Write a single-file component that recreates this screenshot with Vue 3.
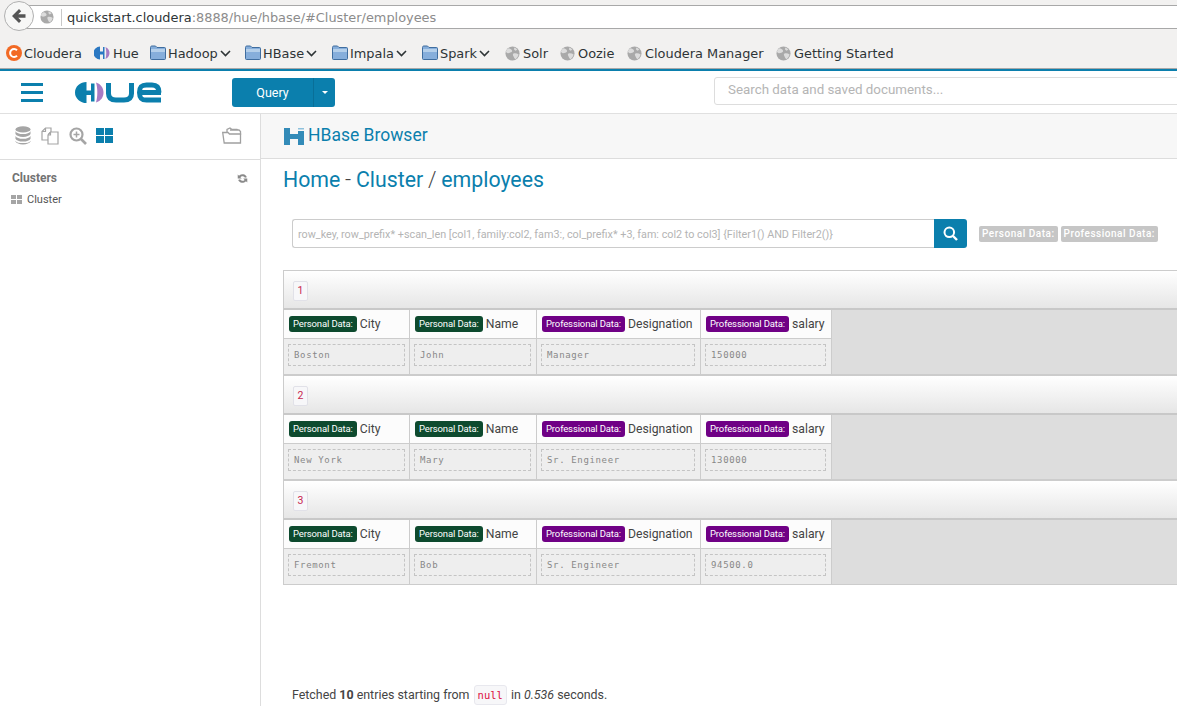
<script setup>
const bookmarks = [
  { icon: 'cloudera', text: 'Cloudera', w: 88 },
  { icon: 'hue', text: 'Hue', w: 56 },
  { icon: 'folder', text: 'Hadoop', chev: true, w: 95 },
  { icon: 'folder', text: 'HBase', chev: true, w: 87 },
  { icon: 'folder', text: 'Impala', chev: true, w: 90 },
  { icon: 'folder', text: 'Spark', chev: true, w: 83 },
  { icon: 'globe', text: 'Solr', w: 55 },
  { icon: 'globe', text: 'Oozie', w: 67 },
  { icon: 'globe', text: 'Cloudera Manager', w: 149 },
  { icon: 'globe', text: 'Getting Started', w: 120 },
]
const columns = [
  { fam: 'Personal Data:', kind: 'personal', name: 'City' },
  { fam: 'Personal Data:', kind: 'personal', name: 'Name' },
  { fam: 'Professional Data:', kind: 'professional', name: 'Designation' },
  { fam: 'Professional Data:', kind: 'professional', name: 'salary' },
]
const rows = [
  { key: '1', values: ['Boston', 'John', 'Manager', '150000'] },
  { key: '2', values: ['New York', 'Mary', 'Sr. Engineer', '130000'] },
  { key: '3', values: ['Fremont', 'Bob', 'Sr. Engineer', '94500.0'] },
]
</script>

<template>
  <div class="page">
    <header class="browser">
      <div class="urlrow">
        <div class="back">
          <svg width="18" height="18" viewBox="0 0 18 18"><path d="M15.5 7.2H8.2l3-3L9 2 2 9l7 7 2.2-2.2-3-3h7.3z" fill="#555"/></svg>
        </div>
        <div class="urlbar">
          <svg class="urlglobe" width="14" height="14" viewBox="0 0 16 16"><circle cx="8" cy="8" r="7.5" fill="#a9a9a9"/><path d="M4 2.5c2 .5 3 1.2 3.5 2.5S6 7 4.500 7.500 1.500 7 1 6c.5-1.500 1.500-2.800 3-3.500zM9 8c2-.5 4 0 5.500 1-.5 2.500-2 4-3.500 5-1-.5-1.500-2-2-3s-1-2.500 0-3zM10 1.500c1.500.5 2.500 1.500 3.200 2.500L11 5 9.500 3.500z" fill="#dcdcdc"/></svg>
          <span class="urlsep"></span>
          <span class="urltext">quickstart.cloudera<span class="urlrest">:8888/hue/hbase/#Cluster/employees</span></span>
        </div>
      </div>
      <nav class="bookmarks">
        <div v-for="b in bookmarks" :key="b.text" class="bm" :style="{ width: b.w + 'px' }">
          <svg v-if="b.icon === 'cloudera'" class="bmicon" width="16" height="16" viewBox="0 0 16 16"><circle cx="8" cy="8" r="8" fill="#f26a25"/><path d="M11 5.200A4 4 0 1 0 11 10.800" fill="none" stroke="#fff" stroke-width="2"/></svg>
          <svg v-else-if="b.icon === 'hue'" class="bmicon hueicon" width="16" height="16" viewBox="0 0 16 16"><path d="M6 1.500A6.500 6.500 0 0 0 6 14.500V9.500H9V14H10.500V2H9V6.500H6z" fill="#2b78c2"/><path d="M11.500 2C14.500 3.500 15.500 6 15.500 8S14.500 12.500 11.500 14C12.500 10.500 12.500 5.500 11.500 2z" fill="#a77bc4"/></svg>
          <svg v-else-if="b.icon === 'folder'" class="bmicon" width="16" height="16" viewBox="0 0 16 16"><path d="M.5 2.500c0-1 .5-1.500 1.500-1.500h3.500l1.500 1.500h7.500c.7 0 1 .4 1 1v10c0 .7-.4 1-1 1H1.500c-.7 0-1-.4-1-1z" fill="#86aedb" stroke="#3f6d9f"/><path d="M1 4h14v3H1z" fill="#b4cfea"/></svg>
          <svg v-else class="bmicon globe" width="15" height="15" viewBox="0 0 16 16"><circle cx="8" cy="8" r="7.500" fill="#a9a9a9"/><path d="M4 2.500c2 .5 3 1.200 3.500 2.500S6 7 4.500 7.500 1.500 7 1 6c.5-1.500 1.500-2.800 3-3.500zM9 8c2-.5 4 0 5.500 1-.5 2.500-2 4-3.500 5-1-.5-1.500-2-2-3s-1-2.500 0-3zM10 1.500c1.500.5 2.500 1.500 3.200 2.500L11 5 9.500 3.500z" fill="#dcdcdc"/></svg>
          <span class="bmtext">{{ b.text }}</span>
          <svg v-if="b.chev" class="chev" width="11" height="7" viewBox="0 0 11 7"><path d="M1 1l4.500 4.500L10 1" fill="none" stroke="#2e3436" stroke-width="1.600"/></svg>
        </div>
      </nav>
    </header>

    <div class="hue-nav">
      <button class="burger" aria-label="menu"><i></i><i></i><i></i></button>
      <svg class="logo" width="87" height="21" viewBox="0 0 87 21">
        <path d="M11.500 0A11.500 10.500 0 0 0 11.500 21V13H16V19.500H19.500V1.500H16V8.500H11.500z" fill="#0b7fad"/>
        <path d="M21 .5C26 2 28.500 6 28.500 10.500S26 19 21 20.500C22.800 15 22.800 6 21 .5z" fill="#a77bc4"/>
        <path d="M33.500 1V11.500C33.500 16 36 18 41 18H49C54 18 56.500 16 56.500 11.500V1" fill="none" stroke="#0b7fad" stroke-width="5"/>
        <path d="M84 10.500C84 5 81.500 3 77 3H71.500C66 3 64.500 5 64.500 10.500S66 18 71.500 18H86M64 10.500H86" fill="none" stroke="#0b7fad" stroke-width="5"/>
      </svg>
      <div class="query">
        <span class="q-main">Query</span>
        <span class="q-caret"><i></i></span>
      </div>
      <div class="nav-search">Search data and saved documents...</div>
    </div>

    <div class="body">
      <aside class="sidebar">
        <div class="side-tabs">
          <svg width="16" height="19" viewBox="0 0 17 20"><g fill="#a5a5a5"><ellipse cx="8.500" cy="3.500" rx="8" ry="3.200"/><path d="M.5 5.500c1 2 4 3 8 3s7-1 8-3v3c-1 2-4 3-8 3s-7-1-8-3zM.5 10.500c1 2 4 3 8 3s7-1 8-3v3c-1 2-4 3-8 3s-7-1-8-3z"/><path d="M.5 15.500c1 2 4 2.500 8 2.500s7-.5 8-2.500v1c-1 2-4 3-8 3s-7-1-8-3z"/></g></svg>
          <svg class="t2" width="18" height="18" viewBox="0 0 18 18"><g fill="#fff" stroke="#a5a5a5" stroke-width="1.200"><path d="M4.500 1H10v4L8 6.500V13H1V4.500z"/><path d="M9.500 5H17V17H7V8z"/><path d="M4.500 1V4.500H1M9.500 5V8H7" fill="none"/></g></svg>
          <svg class="t3" width="18" height="18" viewBox="0 0 18 18"><circle cx="7.500" cy="7.500" r="6" fill="none" stroke="#a5a5a5" stroke-width="2.200"/><path d="M12 12l5 5" stroke="#a5a5a5" stroke-width="2.600"/><path d="M4.500 7.500h6M7.500 4.500v6" stroke="#a5a5a5" stroke-width="1.500"/></svg>
          <svg class="t4" width="17" height="15" viewBox="0 0 17 15"><path d="M0 0h8v7H0zM9 0h8v7H9zM0 8h8v7H0zM9 8h8v7H9z" fill="#0b7fad"/></svg>
          <svg class="t5" width="20" height="17" viewBox="0 0 20 17"><g fill="#fff" stroke="#a0a0a0" stroke-width="1.300"><path d="M5 5V2.500L8 1l2 1.500h5L16 4v2"/><path d="M8 3h9l1.500 1.500V8"/><path d="M.7 5.500H6l1.500 1.500h11v9H2.200z"/></g></svg>
        </div>
        <div class="clusters">
          <div class="cl-head">
            <span>Clusters</span>
            <svg width="11" height="11" viewBox="0 0 12 12"><path d="M10.700 4.500A5 5 0 0 0 2.200 3L.8 1.600V6h4.400L3.700 4.500a3 3 0 0 1 5 .7zM1.300 7.500A5 5 0 0 0 9.800 9l1.400 1.400V6H6.800l1.500 1.500a3 3 0 0 1-5-.7z" fill="#8a8a8a"/></svg>
          </div>
          <div class="cl-item">
            <svg width="11" height="9" viewBox="0 0 11 9"><path d="M0 0h5v4H0zM6 0h5v4H6zM0 5h5v4H0zM6 5h5v4H6z" fill="#a5a5a5"/></svg>
            <span>Cluster</span>
          </div>
        </div>
      </aside>

      <main class="main">
        <div class="app-head">
          <svg width="20" height="17" viewBox="0 0 20 17"><path d="M0 0h6v6h8V3h6v14h-6v-6H6v6H0z" fill="#338bb8"/><path d="M14 0h6v1.500h-6z" fill="#8ec1dc"/></svg>
          <span class="app-title">HBase Browser</span>
        </div>

        <h1 class="crumbs"><a>Home</a><b> - </b><a>Cluster</a><b> / </b><a>employees</a></h1>

        <div class="search-row">
          <div class="search-input">row_key, row_prefix* +scan_len [col1, family:col2, fam3:, col_prefix* +3, fam: col2 to col3] {Filter1() AND Filter2()}</div>
          <button class="search-btn" aria-label="search">
            <svg width="15" height="15" viewBox="0 0 15 15"><circle cx="6.300" cy="6.300" r="4.800" fill="none" stroke="#fff" stroke-width="2"/><path d="M10 10l4 4" stroke="#fff" stroke-width="2.400"/></svg>
          </button>
          <div class="fam-tags">
            <span class="fam-tag">Personal Data:</span>
            <span class="fam-tag">Professional Data:</span>
          </div>
        </div>

        <section class="table">
          <div v-for="r in rows" :key="r.key" class="row">
            <div class="row-key"><code>{{ r.key }}</code></div>
            <div class="row-cells">
              <div v-for="(c, i) in columns" :key="c.name" class="col">
                <div class="col-head">
                  <span class="label" :class="c.kind">{{ c.fam }}</span>
                  <span class="col-name">{{ c.name }}</span>
                </div>
                <div class="col-val"><div class="dash">{{ r.values[i] }}</div></div>
              </div>
              <div class="filler"></div>
            </div>
          </div>
        </section>

        <p class="fetched">Fetched <strong>10</strong> entries starting from <code>null</code> in <em>0.536</em> seconds.</p>
      </main>
    </div>
  </div>
</template>

<style scoped>
.page { width: 1177px; height: 706px; overflow: hidden; background: #fff; font-family: Roboto, sans-serif; color: #444; display: flex; flex-direction: column; }
.browser { height: 71px; flex: none; box-sizing: border-box; background: #f2f1f0; border-bottom: 2px solid #0b7fad; box-shadow: inset 0 -1px 0 #a8a8a8; font-family: "DejaVu Sans", sans-serif; color: #2e3436; }
.urlrow { height: 35px; padding-top: 2px; position: relative; box-sizing: border-box; }
.back { position: absolute; left: 4px; top: 1px; width: 30px; height: 30px; box-sizing: border-box; border: 1px solid #b0b0b0; border-radius: 50%; background: #f7f7f6; display: flex; align-items: center; justify-content: center; z-index: 1; }
.urlbar { margin: 3px 0 0 18px; height: 24px; box-sizing: border-box; background: #fff; border-top: 1px solid #a8a8a8; border-bottom: 1px solid #a8a8a8; display: flex; align-items: center; padding-left: 22px; }
.urlglobe { flex: none; }
.urlsep { width: 1px; height: 17px; background: #c8c8c8; margin: 0 5px 0 7px; }
.urltext { font-size: 12.900px; color: #2e3436; white-space: nowrap; }
.urlrest { color: #8c8c8c; }
.bookmarks { display: flex; align-items: center; height: 34px; padding: 2px 0 0 6px; box-sizing: border-box; font-size: 12.900px; }
.bm { display: flex; align-items: center; flex: none; white-space: nowrap; }
.bmicon { flex: none; margin-right: 2px; }
.hueicon { margin-right: 3px; }
.globe { margin-right: 3px; }
.bmtext { display: block; }
.chev { margin-left: 2px; flex: none; }

.hue-nav { height: 43px; flex: none; box-sizing: border-box; border-bottom: 1px solid #e0e0e0; display: flex; align-items: center; position: relative; }
.burger { flex: none; margin-left: 21px; width: 22px; padding: 0; border: 0; background: none; display: flex; flex-direction: column; gap: 5px; }
.burger i { display: block; height: 3px; background: #0b7fad; }
.logo { margin-left: 32px; flex: none; }
.query { flex: none; margin-left: 70px; width: 103px; height: 29px; display: flex; background: #0b7fad; border-radius: 3px; color: #fff; font-size: 12.500px; }
.q-main { width: 81px; display: flex; align-items: center; justify-content: center; }
.q-caret { flex: 1; border-left: 1px solid #096f98; display: flex; align-items: center; justify-content: center; }
.q-caret i { border: 3px solid transparent; border-top-color: #fff; border-bottom: 0; }
.nav-search { margin-left: 379px; flex: none; width: 480px; height: 28px; box-sizing: border-box; border: 1px solid #ddd; border-radius: 3px; padding-left: 13px; line-height: 24px; font-size: 13.350px; color: #b5b5b5; position: relative; top: -1px; }

.body { flex: 1; display: flex; min-height: 0; }
.sidebar { width: 261px; flex: none; box-sizing: border-box; border-right: 1px solid #ddd; }
.side-tabs { height: 46px; box-sizing: border-box; border-bottom: 1px solid #ddd; display: flex; align-items: center; padding: 0 0 2px 15px; }
.t2 { margin-left: 10px; }
.t3 { margin-left: 10px; }
.t4 { margin-left: 9px; }
.t5 { margin-left: 109px; }
.clusters { padding: 11px 12px 0 12px; }
.cl-head { display: flex; justify-content: space-between; align-items: center; font-size: 12px; font-weight: 700; color: #737373; height: 14px; }
.cl-item { display: flex; align-items: center; gap: 5px; font-size: 11px; color: #555; margin-top: 8px; margin-left: -1px; height: 13px; }

.main { flex: 1; min-width: 0; }
.app-head { height: 45px; box-sizing: border-box; background: #f7f7f7; border-bottom: 1px solid #ddd; display: flex; align-items: center; padding-left: 23px; gap: 4px; color: #0b7fad; font-size: 17.500px; }
.app-title { margin-top: -3px; }
.crumbs { margin: 0; padding: 5px 0 0 22px; height: 42px; box-sizing: border-box; font-size: 21.300px; line-height: 32px; font-weight: 400; color: #444; }
.crumbs a { color: #0b7fad; }
.crumbs b { font-weight: 300; word-spacing: -.4px; }
.search-row { margin: 18px 0 0 31px; display: flex; align-items: center; height: 29px; }
.search-input { width: 642px; height: 29px; box-sizing: border-box; border: 1px solid #ccc; border-right: 0; border-radius: 3px 0 0 3px; padding-left: 5px; font-size: 10.800px; line-height: 29px; color: #b4b4b4; white-space: nowrap; overflow: hidden; }
.search-btn { width: 33px; height: 29px; border: 0; padding: 0; background: #0b7fad; border-radius: 0 3px 3px 0; display: flex; align-items: center; justify-content: center; }
.fam-tags { margin-left: 12px; display: flex; gap: 3px; }
.fam-tag { height: 16px; line-height: 16px; padding: 0 3px; background: #c6c6c6; color: #fff; font-size: 10px; font-weight: 500; border-radius: 2px; letter-spacing: .52px; white-space: nowrap; }

.table { margin: 22px 0 0 22px; width: 1000px; }
.row { height: 105px; box-sizing: border-box; }
.row-key { height: 40px; box-sizing: border-box; border: 1px solid #ccc; border-bottom: 2px solid #c8c8c8; background: linear-gradient(#fff, #e6e6e6); padding: 8px 0 0 9px; }
.row-key code { display: inline-block; width: 15px; height: 20px; box-sizing: border-box; border: 1px solid #e1e1e8; border-radius: 2px; background: #f7f7f9; color: #c7254e; font: 10.500px/18px Roboto, sans-serif; text-align: center; }
.row-cells { height: 65px; display: flex; border-left: 1px solid #ccc; border-bottom: 1px solid #ccc; box-sizing: border-box; }
.col { box-sizing: border-box; border-right: 1px solid #ccc; flex: none; }
.col:nth-child(1) { width: 126px; }
.col:nth-child(2) { width: 127px; }
.col:nth-child(3) { width: 164px; }
.col:nth-child(4) { width: 131px; }
.col-head { height: 29px; box-sizing: border-box; background: #fcfcfc; border-bottom: 1px solid #ccc; padding: 6px 0 0 5px; display: flex; align-items: flex-start; white-space: nowrap; }
.label { height: 16px; line-height: 16px; padding: 0 4px; border-radius: 3px; color: #fff; font-size: 9.500px; margin-right: 3px; letter-spacing: -.13px; }
.personal { background: #0d4a2e; }
.professional { background: #6f0085; }
.col-name { font-size: 12.200px; line-height: 15px; color: #444; margin-top: 1px; }
.col-val { height: 35px; box-sizing: border-box; background: #eee; padding: 5px 5px 0 4px; }
.col:first-child .col-val { padding-right: 4px; }
.dash { height: 22px; box-sizing: border-box; border: 1px dashed #c4c4c4; padding-left: 5px; font: 9px/20px "DejaVu Sans Mono", monospace; letter-spacing: .65px; color: #888; }
.filler { flex: 1; background: #ddd; }
.fetched { margin: 100px 0 0 31px; font-size: 12.420px; color: #444; line-height: 20px; white-space: nowrap; }
.fetched code { display: inline-block; height: 20px; box-sizing: border-box; padding: 0 3px; border: 1px solid #e8e8ee; border-radius: 3px; background: #f7f7f9; color: #d14; font: 10.500px/18px "DejaVu Sans Mono", monospace; margin: 0 1px; }
</style>
